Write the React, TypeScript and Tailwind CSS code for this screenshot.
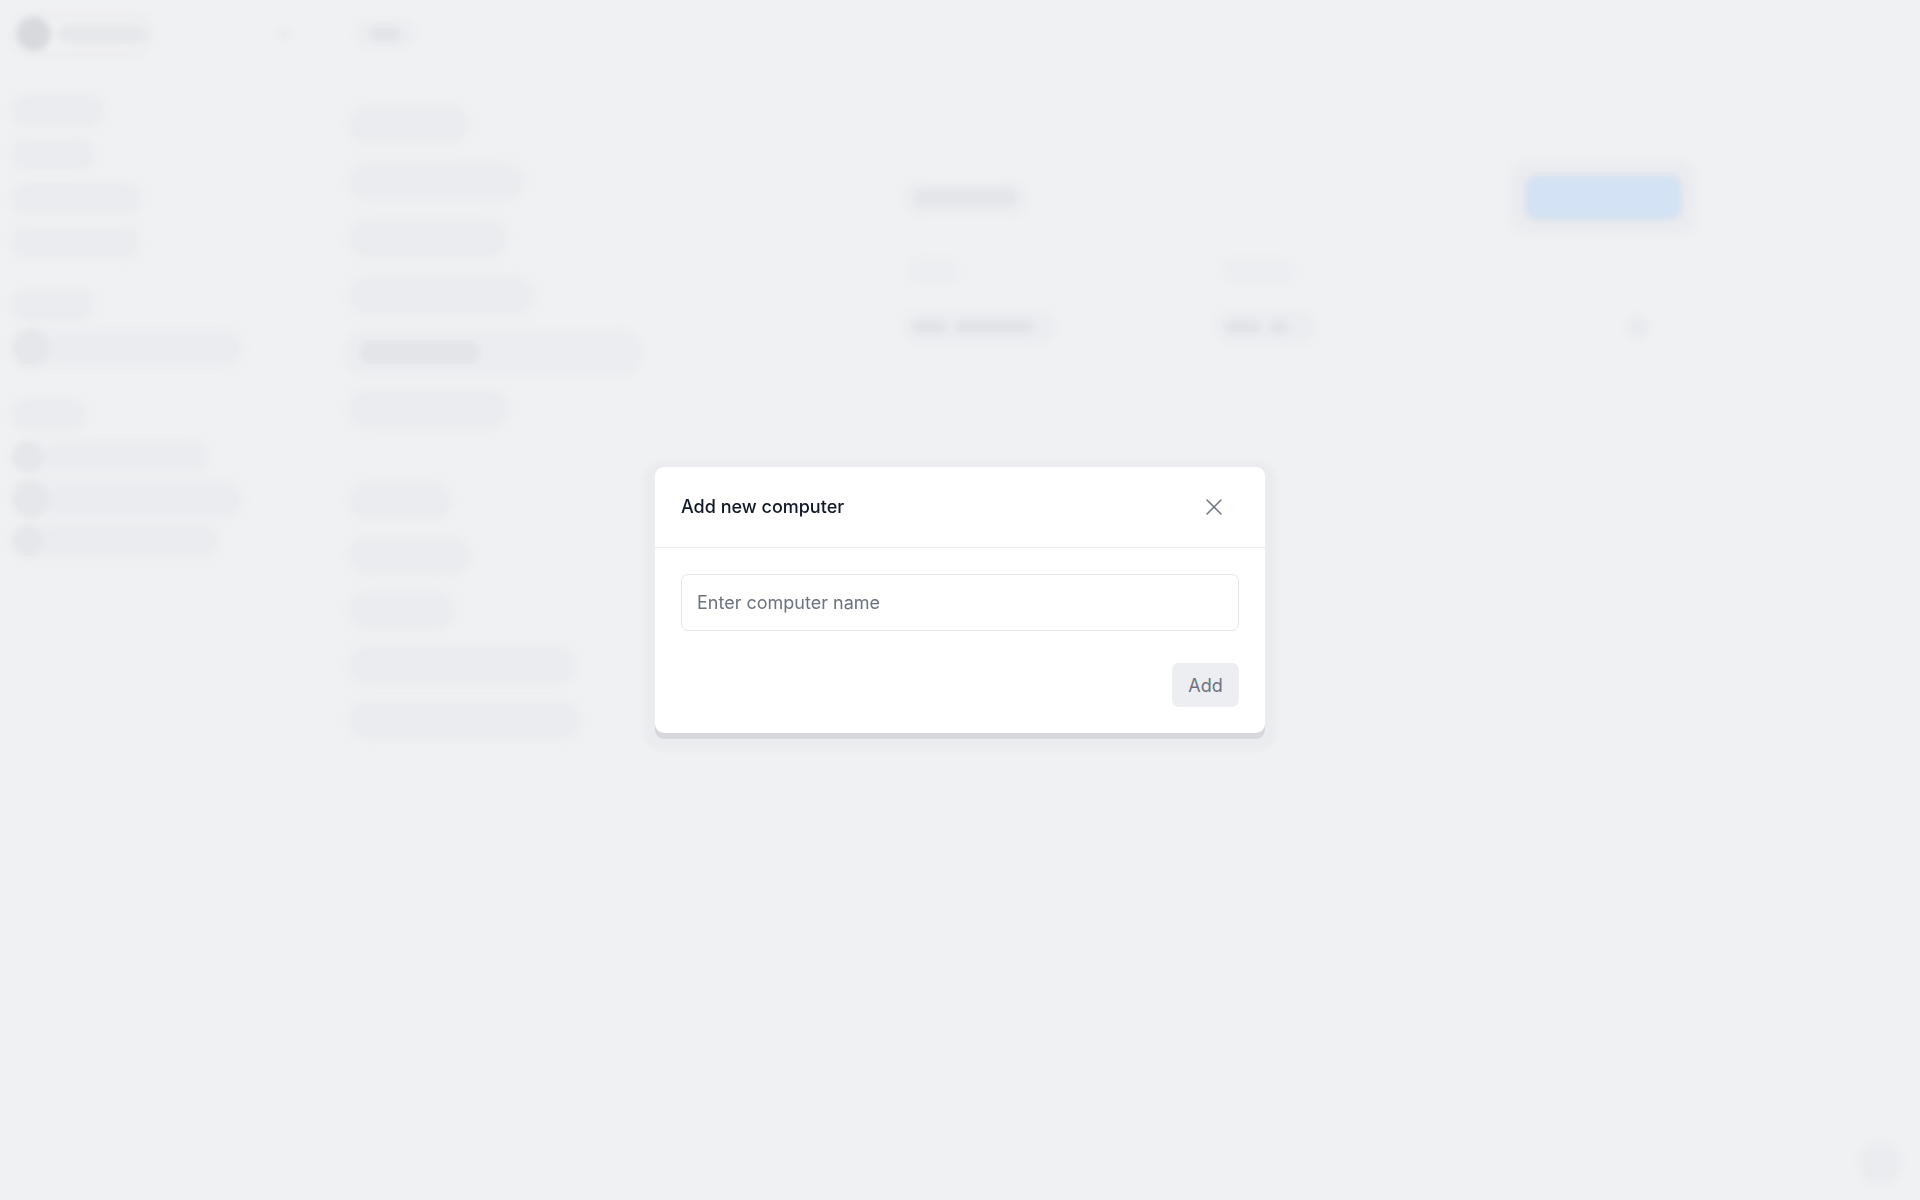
import { X } from 'lucide-react';

type Row = { w: number; dot?: number; gap?: number; h?: number };

const sidebar: Row[] = [
  { w: 92 },
  { w: 82 },
  { w: 129 },
  { w: 127 },
  { w: 82, gap: 18 },
  { w: 229, dot: 38 },
  { w: 74, gap: 22 },
  { w: 196, dot: 32, h: 42 },
  { w: 229, dot: 38, h: 42 },
  { w: 206, dot: 32, h: 42 },
];

const middle: Row[] = [
  { w: 119 },
  { w: 175 },
  { w: 158 },
  { w: 185 },
  { w: 300 },
  { w: 159 },
  { w: 102, gap: 35, h: 55 },
  { w: 122, h: 55 },
  { w: 105, h: 55 },
  { w: 227, h: 55 },
  { w: 231, h: 55 },
];

const Pill = ({ w, h = 31 }: { w: number; h?: number }) => (
  <div
    className="rounded-full bg-[#ebecef] shadow-[0_0_0_5px_#eeeff1]"
    style={{ width: w, height: h }}
  />
);

const Backdrop = () => (
  <div className="h-[1200px] w-full blur-[3px] select-none">
    {/* top bar */}
    <div className="flex h-[68px] items-center">
      <div className="ml-[17px] flex items-center rounded-full shadow-[0_0_0_6px_#ecedf0]">
        <div className="h-[34px] w-[34px] rounded-full bg-[#d8d9dd]" />
        <div className="ml-[6px] h-[20px] w-[90px] rounded-full bg-[#e7e8eb]" />
      </div>
      <div className="ml-[131px] h-[12px] w-[12px] rounded-full bg-[#e9eaed]" />
      <div className="ml-[65px] flex h-[30px] w-[61px] items-center justify-center rounded-full bg-[#ecedf0]">
        <div className="h-[14px] w-[31px] rounded-full bg-[#e3e4e8]" />
      </div>
    </div>

    <div className="flex">
      {/* sidebar */}
      <div className="w-[349px] pl-3 pt-[20px]">
        {sidebar.map((r, i) => (
          <div
            key={i}
            className="flex items-center"
            style={{ height: r.h ?? 44, marginTop: r.gap ?? 0 }}
          >
            {r.dot ? (
              <div className="flex items-center rounded-full bg-[#edeef1] shadow-[0_0_0_5px_#eeeff1]">
                <div
                  className="rounded-full bg-[#e6e7ea]"
                  style={{ width: r.dot, height: r.dot }}
                />
                <div className="h-[28px] rounded-full bg-[#ebecef]" style={{ width: r.w - r.dot }} />
              </div>
            ) : (
              <Pill w={r.w} />
            )}
          </div>
        ))}
      </div>

      {/* middle column */}
      <div className="w-[553px] pt-[28px]">
        {middle.map((r, i) => (
          <div
            key={i}
            className="flex items-center"
            style={{ height: r.h ?? 57, marginTop: r.gap ?? 0 }}
          >
            {i === 4 ? (
              <div className="-ml-[6px] flex h-[48px] w-[300px] items-center rounded-[22px] bg-[#ecedf0] pl-[15px]">
                <div className="h-[25px] w-[123px] rounded-full bg-[#e4e5e9] shadow-[0_0_0_2px_#f0f1f3]" />
              </div>
            ) : (
              <Pill w={r.w} h={37} />
            )}
          </div>
        ))}
      </div>

      {/* main */}
      <div className="flex-1 pt-[92px]">
        <div className="flex w-[800px] items-center justify-between">
          <div className="flex h-[34px] w-[127px] items-center justify-center rounded-full bg-[#ecedf0]">
            <div className="h-[18px] w-[103px] rounded-full bg-[#e5e6ea]" />
          </div>
          <div className="mr-[5px] rounded-[16px] bg-[#ebecef] p-[16px]">
            <div className="h-[43px] w-[155px] rounded-[12px] bg-[#d3e2f5] shadow-[0_0_0_3px_#e4e6ea]" />
          </div>
        </div>
        <div className="mt-[16px] flex h-[40px] items-center">
          <div className="ml-[4px] h-[28px] w-[56px] rounded-full bg-[#edeef1]" />
          <div className="ml-[259px] h-[28px] w-[75px] rounded-full bg-[#edeef1]" />
        </div>
        <div className="mt-[18px] flex h-[36px] items-center">
          <div className="flex h-[34px] w-[154px] items-center gap-[6px] rounded-full bg-[#ecedf0] px-[10px]">
            <div className="h-[14px] w-[36px] rounded-full bg-[#e3e4e8]" />
            <div className="h-[14px] w-[80px] rounded-full bg-[#e3e4e8]" />
          </div>
          <div className="ml-[159px] flex h-[34px] w-[101px] items-center gap-[8px] rounded-full bg-[#ecedf0] px-[10px]">
            <div className="h-[14px] w-[36px] rounded-full bg-[#e3e4e8]" />
            <div className="h-[14px] w-[20px] rounded-full bg-[#e3e4e8]" />
          </div>
          <div className="ml-[310px] h-[24px] w-[24px] rounded-full bg-[#eaebee]" />
        </div>
      </div>
    </div>

    <div className="fixed bottom-[15px] right-[18px] h-[44px] w-[44px] rounded-full bg-[#ebecef]" />
  </div>
);

const App = () => {
  return (
    <div className="relative min-h-[1200px] overflow-hidden bg-[#f0f1f3] font-['Inter','Liberation_Sans',sans-serif]">
      <Backdrop />

      <div className="fixed inset-0 flex items-center justify-center">
        <div className="w-[610px] rounded-[9px] bg-white shadow-[0_6px_0_0_#d7d8dc,0_6px_4px_12px_#ebecef]">
          <div className="flex items-center justify-between border-b border-[#e8e9ec] px-[26px] py-[26px]">
            <h2 className="text-[18px] font-medium leading-[28px] text-[#111827]">Add new computer</h2>
            <button className="mr-[11px] flex h-[28px] w-[28px] items-center justify-center text-[#6b7280]">
              <X size={28} strokeWidth={1.25} />
            </button>
          </div>
          <div className="px-[26px] pb-[26px] pt-[26px]">
            <input
              type="text"
              placeholder="Enter computer name"
              className="h-[57px] w-full rounded-[7px] border border-[#e5e7eb] px-[15px] text-[18px] text-[#111827] outline-none placeholder:text-[#6b7280]"
            />
            <div className="mt-[32px] flex justify-end">
              <button className="h-[44px] w-[67px] rounded-[7px] bg-[#edeef1] text-[18px] text-[#6b7280]">
                Add
              </button>
            </div>
          </div>
        </div>
      </div>
    </div>
  );
};

export default App;
